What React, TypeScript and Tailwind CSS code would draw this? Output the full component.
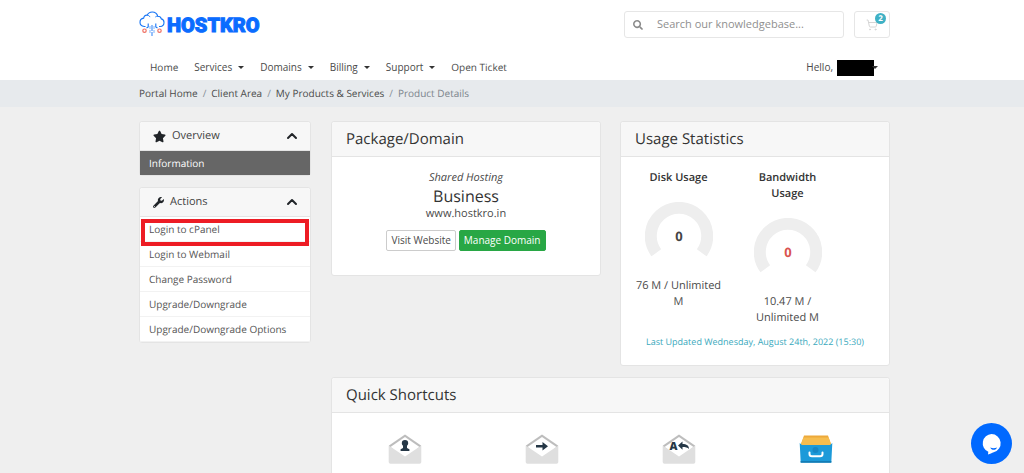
import type { ReactNode } from "react";
import { FaSearch, FaStar, FaWrench } from "react-icons/fa";
import { ChevronUp, ShoppingCart } from "lucide-react";

const container = "mx-auto w-full max-w-[751px]";

function Caret() {
  return (
    <span className="inline-block border-x-[3px] border-t-[3px] border-x-transparent border-t-[#333]" />
  );
}

function Logo() {
  return (
    <a href="#" aria-label="Hostkro" className="flex items-center gap-[2px]">
      <svg width="26" height="26" viewBox="0 0 26 26" fill="none" aria-hidden="true">
        <path
          d="M6.500 15.500H5.200C2.600 15.200 1 13.400 1 11.200 1 9 2.600 7.400 4.700 7.100 4.900 5 6.400 3.900 8.200 4.200 9.200 2 11 1 13.200 1c2.900 0 4.900 1.700 5.500 4.200 2 0 3.300 1 3.600 2.700 1.800.5 2.700 1.700 2.700 3.500 0 2.300-1.500 3.900-3.900 4.100H20"
          stroke="#1473f5"
          strokeWidth="1.100"
        />
        <path d="M8.200 4.200c1.400.1 2.300.8 2.800 1.900M18.700 5.200c-1 0-1.800.3-2.400.8" stroke="#1473f5" strokeWidth="0.900" />
        <path d="M9.200 12.500v3.500L7.500 17M16.800 12.500v3.500l1.700 1" stroke="#1473f5" strokeWidth="1.100" />
        <path d="M13 14v11" stroke="#3d8bf7" strokeWidth="1.100" strokeDasharray="6 1" />
        <path d="M11 15v8M15 15v8" stroke="#6ba8fa" strokeWidth="0.900" strokeDasharray="3 1" />
        <circle cx="5.500" cy="19.700" r="1.700" stroke="#ef6f62" strokeWidth="1.200" />
        <circle cx="20.500" cy="19.700" r="1.700" stroke="#ef6f62" strokeWidth="1.200" />
      </svg>
      <span className="mt-[2px] font-['Roboto',sans-serif] text-[20px] leading-6 font-black text-[#0a6cff] [-webkit-text-stroke:1px_#0a6cff]">
        HOSTKRO
      </span>
    </a>
  );
}

function SidePanel({ icon, title, children }: { icon: ReactNode; title: string; children: ReactNode }) {
  return (
    <section className="rounded-[3px] border border-[#e4e4e4] bg-white">
      <h3 className="flex h-[29px] items-center rounded-t-[3px] border-b border-[#e4e4e4] bg-[#f7f7f7] pr-[10px] pl-[13px] text-[11px] text-[#444]">
        {icon}
        <span className="ml-[6px] flex-1">{title}</span>
        <button type="button" aria-label={"Collapse " + title} className="text-[#212529]">
          <ChevronUp size={16} strokeWidth={3} />
        </button>
      </h3>
      {children}
    </section>
  );
}

function Card({ title, children }: { title: string; children: ReactNode }) {
  return (
    <section className="rounded-[3px] border border-[#e4e4e4] bg-white">
      <h3 className="rounded-t-[3px] border-b border-[#e4e4e4] bg-[#f7f7f7] px-[14px] py-[7px] text-[15px] leading-5 text-[#333]">
        {title}
      </h3>
      {children}
    </section>
  );
}

function Gauge({ label, color, usage }: { label: string; color: string; usage: string }) {
  return (
    <div className="px-[10px] text-center">
      <h4 className="text-[11px] leading-4 font-semibold text-[#333]">{label}</h4>
      <div className="mt-4 mb-2 flex justify-center">
        <svg width="68" height="68" viewBox="0 0 68 68" role="img" aria-label={label}>
          <path d="M11.300 50.800A28.200 28.200 0 1 1 56.700 50.800" fill="none" stroke="#eee" strokeWidth="12" />
          <text
            x="34"
            y="39"
            textAnchor="middle"
            fill={color}
            className="font-['Open_Sans',sans-serif] text-[13px] font-bold"
          >
            0
          </text>
        </svg>
      </div>
      <p className="text-[11px] leading-4">{usage}</p>
    </div>
  );
}

function Envelope({ children }: { children: ReactNode }) {
  return (
    <svg width="34" height="32" viewBox="0 0 34 32" aria-hidden="true">
      <path d="M1 12.500 17 1.500l16 11V16H1z" fill="#bdbdbd" />
      <path d="M2.500 14 17 4l14.500 10L17 26z" fill="#fff" />
      <path d="M.7 12.500 17 23.500l16.300-11V29a1.800 1.800 0 0 1-1.800 1.800h-29A1.800 1.800 0 0 1 .7 29z" fill="#dfdfdf" />
      {children}
    </svg>
  );
}

const shortcuts = [
  {
    label: "Email Accounts",
    icon: (
      <Envelope>
        <path
          d="M17 7a3.200 3.200 0 0 1 3.200 3.200c0 1.300-.6 2-1.200 2.600v2.200l2.400 1.200V18h-8.800v-1.800L15 15v-2.200c-.6-.6-1.200-1.300-1.200-2.600A3.200 3.200 0 0 1 17 7z"
          fill="#253746"
        />
      </Envelope>
    ),
  },
  {
    label: "Forwarders",
    icon: (
      <Envelope>
        <path d="M11 12h6.500V9l5.500 4.200-5.500 4.300v-3H11z" fill="#253746" />
      </Envelope>
    ),
  },
  {
    label: "Autoresponders",
    icon: (
      <Envelope>
        <text x="7.500" y="17" fill="#253746" className="font-['Open_Sans',sans-serif] text-[11px] font-extrabold">
          A
        </text>
        <path d="M16 12.500 20.500 8.500v2.600c4 0 6.500 1.400 6.500 5-1.300-1.600-3.500-2-6.500-2v2.700z" fill="#253746" />
      </Envelope>
    ),
  },
  {
    label: "File Manager",
    icon: (
      <svg width="34" height="32" viewBox="0 0 34 32" aria-hidden="true">
        <path d="M5 2.500h24l3 8.500v3H2v-3z" fill="#eda93b" />
        <path d="M4.500 4.500h25L32 11v2H2v-2z" fill="#f6bd4f" />
        <path d="M.7 10 3 12h28l2.300-2-1 19.500H1.700z" fill="#1c9ad9" />
        <path d="M1.600 28h30.800l-.1 1.800H1.700z" fill="#147cb5" />
        <circle cx="16.500" cy="17" r="3" fill="#1786c4" />
        <path d="M10.500 19.500v1.500c0 1.700 1 2.300 2.500 2.300h8c1.500 0 2.500-.6 2.500-2.300v-1.500" fill="none" stroke="#fff" strokeWidth="2" strokeLinecap="round" />
      </svg>
    ),
  },
];

const navMenus = ["Services", "Domains", "Billing", "Support"];
const actions = ["Login to cPanel", "Login to Webmail", "Change Password", "Upgrade/Downgrade", "Upgrade/Downgrade Options"];
const crumbs = ["Portal Home", "Client Area", "My Products & Services"];

export default function App() {
  return (
    <div className="h-screen overflow-y-auto bg-[#efefef] font-['Open_Sans',sans-serif] text-[11px] text-[#4a4a4a] [scrollbar-width:none] [text-rendering:geometricPrecision]">
      <header className="bg-white pl-[5px]">
        <div className={container + " flex items-start justify-between pt-[11px]"}>
          <Logo />
          <div className="flex gap-[10px]">
            <form className="flex h-[27px] w-[220px] items-center rounded-[3px] border border-[#e6e6e6]">
              <button type="submit" aria-label="Search" className="px-2 text-[#8a8a8a]">
                <FaSearch size={10} />
              </button>
              <input
                type="text"
                aria-label="Search our knowledgebase"
                placeholder="Search our knowledgebase..."
                className="min-w-0 flex-1 pl-[6px] text-[11px] outline-none placeholder:text-[#8f8f8f]"
              />
            </form>
            <a
              href="#"
              aria-label="Shopping cart, 2 items"
              className="relative flex h-[27px] w-9 items-center justify-center rounded-[3px] border border-[#e6e6e6] text-[#d5d5d5]"
            >
              <ShoppingCart size={12} strokeWidth={2} />
              <span className="absolute top-px right-[3px] flex size-[11px] items-center justify-center rounded-full bg-[#3fb1c5] text-[8px] font-bold text-white">
                2
              </span>
            </a>
          </div>
        </div>
        <div className={container + " flex items-center justify-between pt-5 pr-3 pb-1 pl-[11px] text-[10px]"}>
          <nav className="flex items-center gap-4 leading-4">
            <a href="#">Home</a>
            {navMenus.map((name) => (
              <button key={name} type="button" className="flex items-center gap-[6px]">
                {name}
                <Caret />
              </button>
            ))}
            <a href="#">Open Ticket</a>
          </nav>
          <button type="button" aria-label="Account menu" className="flex items-center leading-4">
            Hello,
            <span className="mt-[2px] -mr-[2px] ml-1 h-4 w-[37px] bg-black" />
            <Caret />
          </button>
        </div>
      </header>

      <nav aria-label="Breadcrumb" className="bg-[#e7eaed] pl-[5px]">
        <ol className={container + " flex gap-[5px] py-[5px] text-[10px] leading-[17px]"}>
          {crumbs.map((name) => (
            <li key={name} className="flex gap-[5px]">
              <a href="#">{name}</a>
              <span className="text-[#868e96]">/</span>
            </li>
          ))}
          <li className="text-[#7b848c]">Product Details</li>
        </ol>
      </nav>

      <main className="pl-[5px]">
        <div className={container + " grid grid-cols-[172px_1fr] items-start gap-5 pt-[14px] pb-8"}>
          <aside className="flex flex-col gap-[11px]">
            <SidePanel icon={<FaStar size={13} className="text-[#212529]" />} title="Overview">
              <a href="#" className="block bg-[#666] pl-[9px] text-[10px] leading-6 text-white">
                Information
              </a>
            </SidePanel>
            <SidePanel icon={<FaWrench size={11} className="text-[#212529]" />} title="Actions">
              <ul className="relative divide-y divide-[#f2f2f2] text-[10px] text-[#555]">
                {actions.map((name) => (
                  <li key={name}>
                    <a href="#" className="block pl-[9px] leading-6">
                      {name}
                    </a>
                  </li>
                ))}
                <li className="pointer-events-none absolute top-[2px] right-px left-px h-[27px] border-4 border-[#ed1c24]" />
              </ul>
            </SidePanel>
          </aside>

          <div className="grid grid-cols-2 items-start gap-x-[19px] gap-y-[11px]">
            <Card title="Package/Domain">
              <div className="px-4 pt-[13px] pb-6 text-center">
                <p className="text-[11px] leading-4 italic">Shared Hosting</p>
                <h4 className="text-[16px] leading-5 text-[#333]">Business</h4>
                <a href="#" className="block leading-4">
                  www.hostkro.in
                </a>
                <div className="mt-2 flex justify-center gap-[3px] text-[10px]">
                  <button type="button" className="h-[21px] rounded-[2px] border border-[#ccc] px-1">
                    Visit Website
                  </button>
                  <button type="button" className="h-[21px] rounded-[2px] border border-[#28a745] bg-[#28a745] px-1 text-white">
                    Manage Domain
                  </button>
                </div>
              </div>
            </Card>

            <Card title="Usage Statistics">
              <div className="px-[3px] pt-[13px] pb-[15px]">
                <div className="grid grid-cols-[109px_109px]">
                  <Gauge label="Disk Usage" color="#444" usage="76 M / Unlimited M" />
                  <Gauge label="Bandwidth Usage" color="#d9534f" usage="10.47 M / Unlimited M" />
                </div>
                <p className="mt-2 text-center text-[9px] leading-4 text-[#3aa9bd]">
                  Last Updated Wednesday, August 24th, 2022 (15:30)
                </p>
              </div>
            </Card>

            <div className="col-span-2">
              <Card title="Quick Shortcuts">
                <ul className="grid grid-cols-4 px-1 py-5">
                  {shortcuts.map((item) => (
                    <li key={item.label}>
                      <a href="#" className="flex flex-col items-center gap-[6px] leading-4">
                        {item.icon}
                        {item.label}
                      </a>
                    </li>
                  ))}
                </ul>
              </Card>
            </div>
          </div>
        </div>
      </main>

      <button
        type="button"
        aria-label="Open chat"
        className="fixed right-3 bottom-[9px] flex size-[41px] items-center justify-center rounded-full bg-[#0069ff]"
      >
        <svg width="21" height="22" viewBox="0 0 21 22" aria-hidden="true">
          <path d="M10.500 1a9.300 9.300 0 0 1 2.200 18.300C11 20 9 21.200 7 21.500l.3-2.700A9.300 9.300 0 0 1 10.500 1z" fill="#fff" />
          <path d="M9.300 14.500c2 .9 4.400.9 6.700 0-.5 1.600-1.700 2.300-3.300 2.300s-2.900-.8-3.400-2.300z" fill="#0069ff" />
        </svg>
      </button>
    </div>
  );
}
